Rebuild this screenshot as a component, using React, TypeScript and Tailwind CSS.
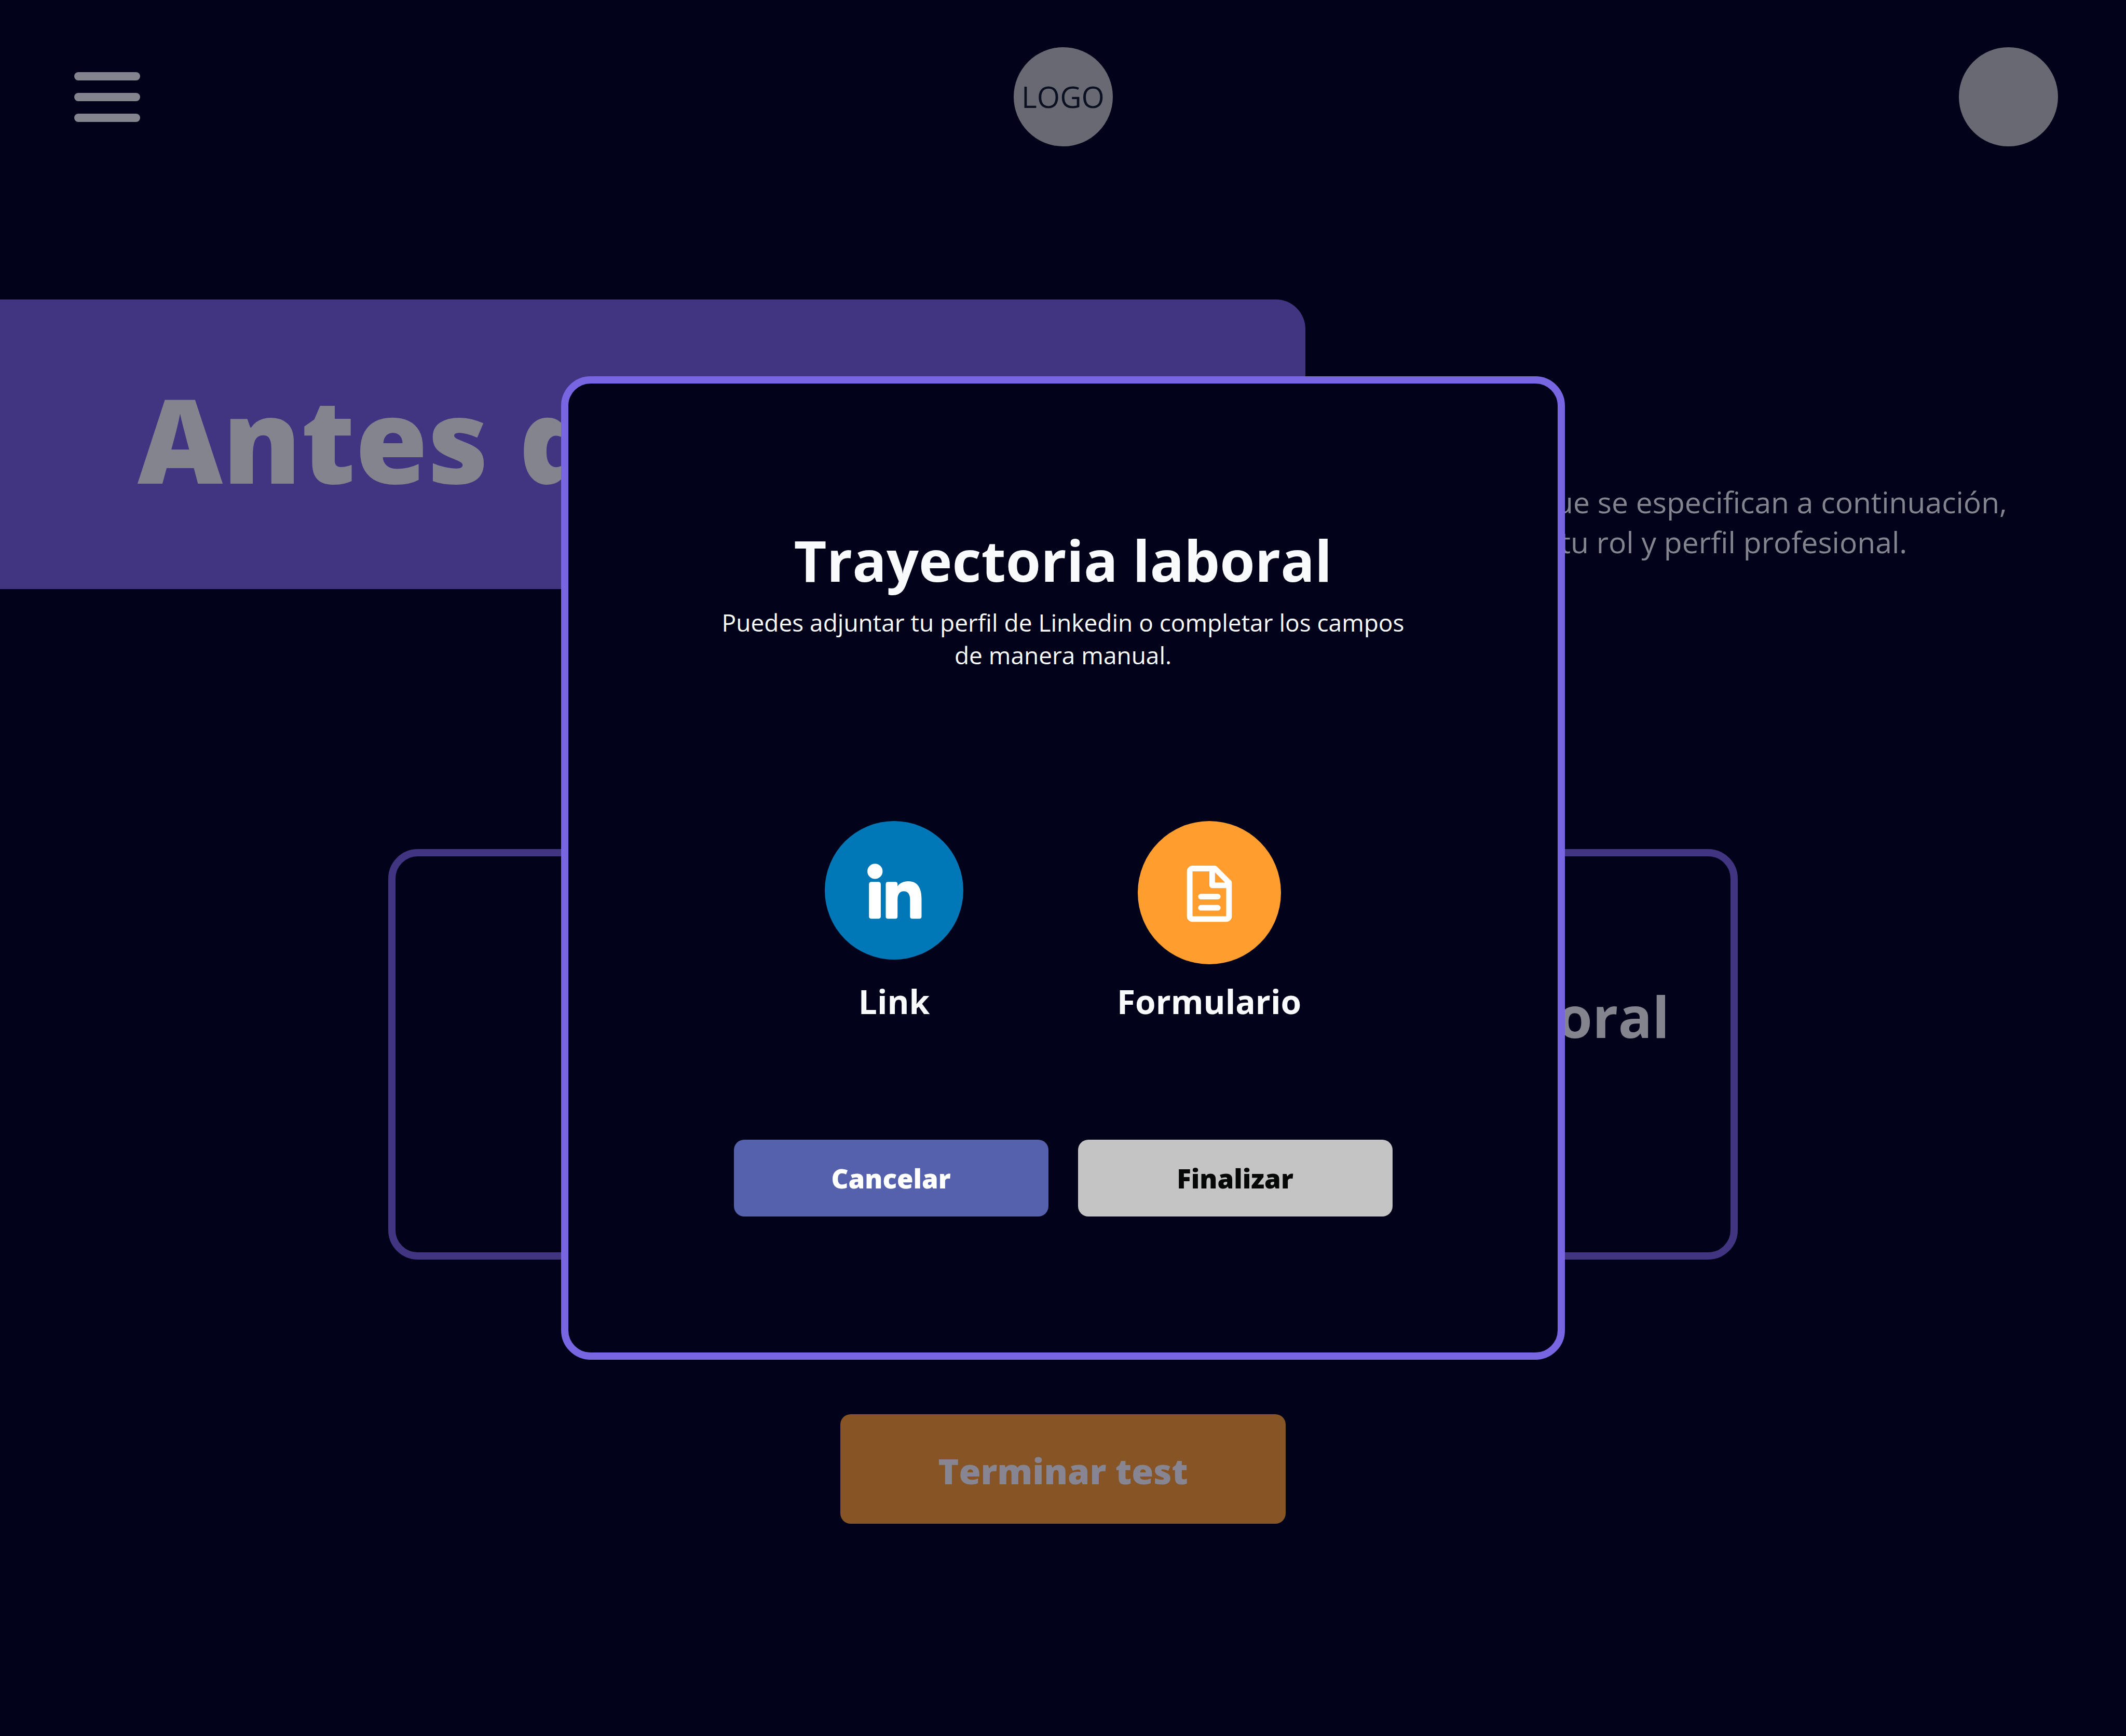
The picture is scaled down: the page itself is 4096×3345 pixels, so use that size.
import type { ReactNode } from "react";

function Header() {
  return (
    <header className="grid grid-cols-3 items-center px-[131px] pt-[91px]">
      <button type="button" aria-label="Abrir menú" className="ml-3 flex w-[127px] flex-col gap-6">
        <span className="h-4 w-full rounded-full bg-[#84848f]" />
        <span className="h-4 w-full rounded-full bg-[#84848f]" />
        <span className="h-4 w-full rounded-full bg-[#84848f]" />
      </button>
      <a
        href="#inicio"
        className="flex size-[191px] items-center justify-center justify-self-center rounded-full bg-[#696974] text-[57px] leading-[77px] text-[#0a1020]"
      >
        LOGO
      </a>
      <button type="button" aria-label="Perfil" className="size-[191px] justify-self-end rounded-full bg-[#696974]" />
    </header>
  );
}

function Card({ title }: { title?: string }) {
  return (
    <article className="h-[791px] rounded-[57px] border-[14px] border-[#413582] pt-[234px] pr-[118px] text-right">
      {title && <h2 className="text-[109px] leading-[148px] font-bold text-[#84848f]">{title}</h2>}
    </article>
  );
}

function Option({ label, children }: { label: string; children: ReactNode }) {
  return (
    <button type="button" className="flex flex-col items-center justify-between gap-[29px]">
      {children}
      <span className="text-[64px] leading-[86px] font-bold">{label}</span>
    </button>
  );
}

function LinkedinIcon() {
  return (
    <svg viewBox="0 0 376 376" className="size-[267px]" aria-hidden="true">
      <circle cx="188" cy="188" r="188" fill="#0077b7" />
      <g fill="#fff">
        <circle cx="136.3" cy="136.5" r="20.6" />
        <rect x="120" y="165" width="32" height="100" rx="6" />
        <path d="M171.500 165H191.500Q197.500 165 197.500 171V177C203 169 213 163.500 227 163.500C253 163.500 262.600 184 262.600 211V259Q262.600 265 256.600 265H237.400Q231.400 265 231.400 259V213C231.400 198 225 190.300 214.400 190.300C204 190.300 197.500 198 197.500 213V259Q197.500 265 191.500 265H171.500Q165.500 265 165.500 259V171Q165.500 165 171.500 165Z" />
      </g>
    </svg>
  );
}

function FormIcon() {
  return (
    <svg viewBox="0 0 388 388" className="size-[276px]" aria-hidden="true">
      <circle cx="194" cy="194" r="194" fill="#ff9d2e" />
      <svg x="102.800" y="105.800" width="182.400" height="182.400" viewBox="0 0 24 24" fill="#fff">
        <path
          fillRule="evenodd"
          d="M6 2H14Q14.400 2 14.700 2.300L19.700 7.300Q20 7.600 20 8V20A2 2 0 0 1 18 22H6A2 2 0 0 1 4 20V4A2 2 0 0 1 6 2ZM6 4V20H18V10H13A1 1 0 0 1 12 9V4ZM14 4.400V8H17.600Z"
        />
        <rect x="8" y="12" width="8" height="2" rx="1" />
        <rect x="8" y="16" width="8" height="2" rx="1" />
      </svg>
    </svg>
  );
}

function TrayectoriaDialog() {
  return (
    <div className="absolute inset-0 flex items-center justify-center">
      <section
        role="dialog"
        aria-modal="true"
        aria-labelledby="dialog-title"
        className="flex w-full max-w-[1934px] flex-col items-center rounded-[57px] border-[14px] border-[#7865e2] bg-[#02031a] pt-[266px] pb-[262px] text-[#f8fafc]"
      >
        <h2 id="dialog-title" className="text-[109px] leading-[148px] font-bold">
          Trayectoria laboral
        </h2>
        <p className="mt-[15px] max-w-[1360px] text-center text-[46px] leading-[63px]">
          Puedes adjuntar tu perfil de Linkedin o completar los campos de manera manual.
        </p>
        <div className="mt-[288px] flex gap-[296px]">
          <Option label="Link">
            <LinkedinIcon />
          </Option>
          <Option label="Formulario">
            <FormIcon />
          </Option>
        </div>
        <div className="mt-[223px] flex gap-[57px] text-[51px] leading-[70px] font-extrabold">
          <button type="button" className="h-[148px] w-[606px] rounded-[20px] bg-[#5661ae] text-white">
            Cancelar
          </button>
          <button type="button" className="h-[148px] w-[606px] rounded-[20px] bg-[#c4c4c4] text-[#050807]">
            Finalizar
          </button>
        </div>
      </section>
    </div>
  );
}

export default function App() {
  return (
    <div className="relative min-h-screen overflow-hidden bg-[#02031a] font-['Open_Sans',sans-serif]">
      <Header />
      <main className="flex flex-col">
        <div className="mt-[295px] flex items-end">
          <div className="flex h-[558px] w-[61.4%] items-center rounded-r-[57px] bg-[#413582] pb-6 pl-[265px]">
            <h1 className="text-[226px] leading-[308px] font-extrabold whitespace-nowrap text-[#84848f]">
              Antes de empezar
            </h1>
          </div>
          <p className="ml-10 pb-[52px] text-[57px] leading-[77px] whitespace-nowrap text-[#84848f]">
            Llena las áreas que se especifican a continuación,
            <br />
            para determinar tu rol y perfil profesional.
          </p>
        </div>
        <div className="mx-[18.25%] mt-[501px] grid grid-cols-2 gap-[57px]">
          <Card />
          <Card title="Laboral" />
        </div>
        <button
          type="button"
          className="mt-[298px] h-[211px] w-[858px] self-center rounded-[20px] bg-[#865425] pt-1.5 text-[68px] leading-[93px] font-extrabold text-[#878592]"
        >
          Terminar test
        </button>
      </main>
      <TrayectoriaDialog />
    </div>
  );
}
